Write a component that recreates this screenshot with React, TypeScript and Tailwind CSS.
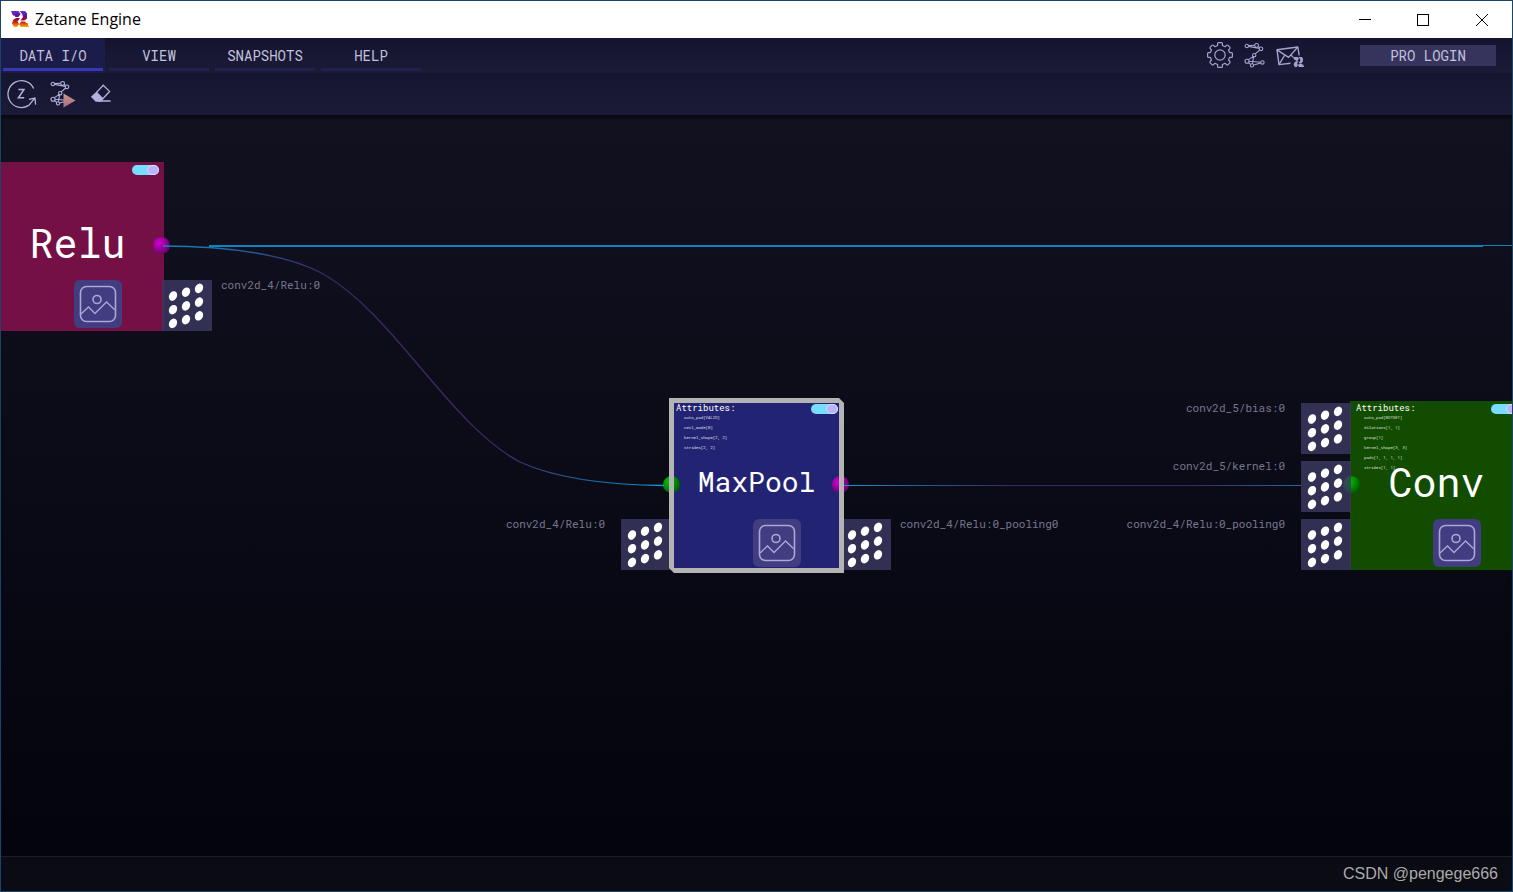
import { useState } from "react";
import clsx from "clsx";

type NodeProps = {
  title: string;
  position: string;
  color: string;
  titleSize: string;
  attributes?: string[];
  inputs?: string[];
  outputs?: string[];
  selected?: boolean;
};

const TABS = ["DATA I/O", "VIEW", "SNAPSHOTS", "HELP"];

const NODES: NodeProps[] = [
  {
    title: "Relu",
    position: "-left-[10px] top-[47px]",
    color: "bg-[#751046]",
    titleSize: "text-[40px]",
    outputs: ["conv2d_4/Relu:0"],
  },
  {
    title: "MaxPool",
    position: "left-[669px] top-[286px]",
    color: "bg-[#232374]",
    titleSize: "text-[28px]",
    attributes: [
      "auto_pad[VALID]",
      "ceil_mode[0]",
      "kernel_shape[2, 2]",
      "strides[2, 2]",
    ],
    inputs: ["conv2d_4/Relu:0"],
    outputs: ["conv2d_4/Relu:0_pooling0"],
    selected: true,
  },
  {
    title: "Conv",
    position: "left-[1349px] top-[286px]",
    color: "bg-[#124c00]",
    titleSize: "text-[40px]",
    attributes: [
      "auto_pad[NOTSET]",
      "dilations[1, 1]",
      "group[1]",
      "kernel_shape[3, 3]",
      "pads[1, 1, 1, 1]",
      "strides[1, 1]",
    ],
    inputs: [
      "conv2d_5/bias:0",
      "conv2d_5/kernel:0",
      "conv2d_4/Relu:0_pooling0",
    ],
  },
];

const LogoMark = () => (
  <>
    <path d="M0 0H7.4L9.6 3L7.4 6H4.4L3.6 4.6H2Z" />
    <path d="M8.6 0H14L16 2.2V7.4L13.4 9.6H9.4L12 6L11.2 3Z" />
    <path d="M2.2 9L5 6.9H9L6.6 10.4L8 13L6 16H3L1 12.4Z" />
    <path d="M9.6 16L8.2 13.2L10.2 10.5H14L15 12H16.4L18 16Z" />
  </>
);

const ZetaneLogo = () => (
  <svg width="18" height="17" viewBox="0 0 18 17" aria-hidden="true">
    <defs>
      <linearGradient id="logo" gradientUnits="userSpaceOnUse" x1="0" y1="0" x2="0" y2="16">
        <stop offset="0" stopColor="#6a2be0" />
        <stop offset="0.3" stopColor="#5a1590" />
        <stop offset="0.5" stopColor="#900a3c" />
        <stop offset="0.72" stopColor="#d02a10" />
        <stop offset="1" stopColor="#ffb400" />
      </linearGradient>
    </defs>
    <g fill="url(#logo)">
      <LogoMark />
    </g>
  </svg>
);

const ZGraph = () => (
  <g fill="none" stroke="currentColor" strokeWidth="1.1">
    <path d="M4.4 2.6L10.8 2.2M4.4 3.4L15.4 5.4M14.2 3.4L15.8 4.6M15.8 7L11.2 10.8M9.4 13.4L4.4 16.6M9.6 13.6L8.4 20.8M4.9 18.2L16.7 19.2M4.6 19.6L6.6 21.4M9.6 22L16.8 20" />
    <circle cx="2.8" cy="3" r="1.7" />
    <circle cx="12.6" cy="2.4" r="1.9" />
    <circle cx="17" cy="5.8" r="1.8" />
    <circle cx="10.2" cy="12.2" r="1.7" />
    <circle cx="3" cy="18.2" r="2" />
    <circle cx="8" cy="22.4" r="1.6" />
    <circle cx="18.4" cy="19.4" r="1.7" />
  </g>
);

const GearIcon = () => (
  <svg width="28" height="28" viewBox="0 0 28 28" fill="none" stroke="currentColor" strokeWidth="1.2" strokeLinejoin="round">
    <path d="M11.6 3.5V1.6Q11.6 0.6 12.6 0.6H15.4Q16.4 0.6 16.4 1.6V3.5L19.2 4.7L20.5 3.4Q21.3 2.7 22 3.4L23.8 5.2Q24.5 5.9 23.8 6.7L22.5 8L23.6 10.6H25.4Q26.4 10.6 26.4 11.6V14.4Q26.4 15.4 25.4 15.4H23.6L22.5 18L23.8 19.3Q24.5 20.1 23.8 20.8L22 22.6Q21.3 23.3 20.5 22.6L19.2 21.3L16.4 22.5V24.4Q16.4 25.4 15.4 25.4H12.6Q11.6 25.4 11.6 24.4V22.5L8.8 21.3L7.5 22.6Q6.7 23.3 6 22.6L4.2 20.8Q3.5 20.1 4.2 19.3L5.5 18L4.4 15.4H2.6Q1.6 15.4 1.6 14.4V11.6Q1.6 10.6 2.6 10.6H4.4L5.5 8L4.2 6.7Q3.5 5.9 4.2 5.2L6 3.4Q6.7 2.7 7.5 3.4L8.8 4.7Z" />
    <circle cx="14" cy="13" r="5.2" />
  </svg>
);

const MailIcon = () => (
  <svg width="30" height="24" viewBox="0 0 30 24" fill="none" stroke="currentColor" strokeWidth="1.4" strokeLinejoin="round">
    <path d="M15.5 19.2L4 20.6L2 5.8L22.8 3L24.2 11.4" />
    <path d="M2 5.8L13.6 13.4L22.8 3M4 20.6L9.8 11M16 11L18 13" />
    <g fill="currentColor" stroke="none" transform="translate(18 13) scale(0.62)">
      <LogoMark />
    </g>
  </svg>
);

const RestartIcon = () => (
  <svg width="30" height="30" viewBox="0 0 30 30" fill="none" stroke="currentColor" strokeWidth="1.3">
    <path d="M26.6 9.6A13.4 13.4 0 1 0 21.6 26.4" />
    <path d="M21.6 26.6L27.8 19.2M22 20.4L28 19L28.6 25.6" />
    <path d="M11.4 10.4H17L11.4 18.8H17.2" strokeWidth="1.5" />
  </svg>
);

const RunIcon = () => (
  <svg width="27" height="28" viewBox="0 0 27 28">
    <defs>
      <linearGradient id="run" x1="0" y1="0" x2="0" y2="1">
        <stop offset="0" stopColor="#c89a86" />
        <stop offset="1" stopColor="#a9688a" />
      </linearGradient>
    </defs>
    <g transform="translate(0 1)">
      <ZGraph />
    </g>
    <path d="M13.5 13.5L25.5 20.5L13.5 27.5Z" fill="url(#run)" />
  </svg>
);

const EraserIcon = () => (
  <svg width="22" height="22" viewBox="0 0 22 22" fill="none" stroke="currentColor" strokeWidth="1.3">
    <path d="M6.6 9.4L13.2 2.2L19.6 8.4L10.6 18M8 18H20.6" />
    <path d="M6.6 9.4L12.6 15.6L10.4 18H6L1.8 13.8Z" fill="currentColor" />
  </svg>
);

const PictureIcon = () => (
  <svg width="38" height="38" viewBox="0 0 38 38" fill="none" stroke="#aaa8d8" strokeWidth="1.6">
    <rect x="1.5" y="1.5" width="35" height="35" rx="6" />
    <circle cx="18" cy="14.5" r="4" />
    <path d="M2 29L9.5 22L16 28.5L27.5 17L36 25" strokeWidth="1.3" />
  </svg>
);

const Tensor = () => (
  <svg width="50" height="51" viewBox="0 0 50 51" className="shrink-0" aria-hidden="true">
    <rect width="50" height="51" fill="#3a3860" fillOpacity="0.82" />
    <g fill="#fff">
      {[0, 1, 2].map((col) =>
        [0, 1, 2].map((row) => {
          const x = 11 + col * 13;
          const y = 16 + row * 13.7 - col * 3.8;
          return (
            <ellipse key={`${col}${row}`} cx={x} cy={y} rx="3.9" ry="5" transform={`rotate(28 ${x} ${y})`} />
          );
        })
      )}
    </g>
  </svg>
);

const GraphNode = ({
  title,
  position,
  color,
  titleSize,
  attributes = [],
  inputs = [],
  outputs = [],
  selected,
}: NodeProps) => {
  return (
    <section aria-label={title} className={clsx("absolute h-[169px] w-[173px]", position)}>
      <div className={clsx("relative h-full overflow-hidden", color)}>
        {attributes.length > 0 && (
          <div className="absolute top-[2px] left-[6px] text-white">
            <p className="text-[9px] leading-[10px]">Attributes:</p>
            <ul className="pl-2 text-[4px] leading-[10px] text-white/80">
              {attributes.map((item) => (
                <li key={item}>{item}</li>
              ))}
            </ul>
          </div>
        )}
        <input
          type="checkbox"
          role="switch"
          defaultChecked
          aria-label={`Enable ${title}`}
          className="absolute top-[3px] right-[5px] h-[10px] w-[27px] appearance-none rounded-full bg-[#78dcff] before:absolute before:top-0 before:right-0 before:h-[10px] before:w-[12px] before:rounded-full before:border before:border-[#dcdcff] before:bg-[#b9b4fa]"
        />
        <h2 className={clsx("flex h-full items-center justify-center pb-2 font-normal text-white", titleSize)}>
          {title}
        </h2>
        <button
          type="button"
          aria-label={`Preview ${title}`}
          className="absolute top-[118px] left-[83px] flex size-12 items-center justify-center rounded-md bg-[#413d80]"
        >
          <PictureIcon />
        </button>
      </div>

      <span className="absolute top-[75px] -left-[7px] size-[17px] rounded-full bg-radial-[at_35%_35%] from-[#00c800] to-[#003c00]" />
      <span className="absolute top-[75px] -right-[6px] size-[17px] rounded-full bg-radial-[at_35%_35%] from-[#d200d2] to-[#460046]" />

      <ul className="absolute right-[172px] bottom-0 z-20 flex flex-col gap-[7px]">
        {inputs.map((name) => (
          <li key={name} className="flex items-start justify-end gap-4">
            <span className="text-[11px] leading-[10px] whitespace-nowrap text-[#77768e]">{name}</span>
            <Tensor />
          </li>
        ))}
      </ul>
      <ul className="absolute bottom-0 left-[171px] z-20 flex flex-col gap-[7px]">
        {outputs.map((name) => (
          <li key={name} className="flex items-start gap-[9px]">
            <Tensor />
            <span className="text-[11px] leading-[10px] whitespace-nowrap text-[#77768e]">{name}</span>
          </li>
        ))}
      </ul>

      {selected && (
        <div className="pointer-events-none absolute -inset-x-px -inset-y-[3px] z-30 border-[5px] border-[#b4b4b4] [clip-path:polygon(0_0,calc(100%-5px)_0,100%_5px,100%_100%,5px_100%,0_calc(100%-5px))]" />
      )}
    </section>
  );
};

const Wires = () => (
  <svg className="pointer-events-none absolute inset-0 z-10 h-full w-full" fill="none" aria-hidden="true">
    <defs>
      <linearGradient id="curve" gradientUnits="userSpaceOnUse" x1="162" y1="0" x2="663" y2="0">
        <stop offset="0" stopColor="#1482be" />
        <stop offset="0.15" stopColor="#1e64a0" />
        <stop offset="0.32" stopColor="#3c2864" />
        <stop offset="0.68" stopColor="#3c2864" />
        <stop offset="0.85" stopColor="#1e64a0" />
        <stop offset="1" stopColor="#1496dc" />
      </linearGradient>
      <linearGradient id="link" gradientUnits="userSpaceOnUse" x1="842" y1="0" x2="1349" y2="0">
        <stop offset="0" stopColor="#1496dc" />
        <stop offset="0.15" stopColor="#1e5f9b" />
        <stop offset="0.34" stopColor="#3c2864" />
        <stop offset="0.68" stopColor="#3c2864" />
        <stop offset="0.92" stopColor="#1e6eaa" />
      </linearGradient>
    </defs>
    <path d="M162 131C229 131 289 140 324 160C394 201 449 310 519 347C554 363 604 370 663 370.5" stroke="url(#curve)" strokeWidth="1.3" />
    <path d="M208 131H1482" stroke="#0f82be" strokeWidth="2" />
    <path d="M1482 130.5H4000" stroke="#0f82be" />
    <path d="M842 370.5H1300" stroke="url(#link)" />
  </svg>
);

const App = () => {
  const [activeTab, setActiveTab] = useState("DATA I/O");

  return (
    <div className="flex min-h-screen flex-col border border-[#1b4568] bg-[#0a0a16] font-['Roboto_Mono','Liberation_Mono',monospace]">
      <header className="flex h-[37px] items-center justify-between bg-white font-['Segoe_UI','Open_Sans',sans-serif] text-black">
        <div className="flex items-center gap-[6px] pl-[10px]">
          <ZetaneLogo />
          <h1 className="pb-[2px] text-[16px] leading-5">Zetane Engine</h1>
        </div>
        <div className="flex h-full">
          <button type="button" aria-label="Minimize" className="flex w-[58px] items-center justify-center">
            <svg width="12" height="12" stroke="currentColor">
              <path d="M0 5.5H12" />
            </svg>
          </button>
          <button type="button" aria-label="Maximize" className="flex w-[58px] items-center justify-center">
            <svg width="12" height="12" fill="none" stroke="currentColor">
              <rect x="0.5" y="0.5" width="11" height="11" />
            </svg>
          </button>
          <button type="button" aria-label="Close" className="flex w-[60px] items-center justify-center">
            <svg width="12" height="12" stroke="currentColor">
              <path d="M0 0L12 12M12 0L0 12" />
            </svg>
          </button>
        </div>
      </header>

      <div className="flex h-[35px] items-center justify-between bg-linear-to-b from-[#141430] to-[#1b1b38] text-[#c3c2dc]">
        <nav className="flex h-full">
          {TABS.map((tab) => (
            <button
              key={tab}
              type="button"
              onClick={() => setActiveTab(tab)}
              className={clsx(
                "flex w-[106px] flex-col justify-end pr-1 pb-[2px] pl-[2px] text-[14px]",
                tab === activeTab && "bg-linear-to-r from-[#1c1c4a] from-[104px] to-transparent to-[104px]"
              )}
            >
              <span
                className={clsx(
                  "w-full border-b-[3px] leading-6",
                  tab === activeTab ? "border-[#3838b4]" : "border-[#21214d]"
                )}
              >
                {tab}
              </span>
            </button>
          ))}
        </nav>
        <div className="flex items-center pr-4 text-[#a5a3cd]">
          <button type="button" aria-label="Settings" className="mr-[10px]">
            <GearIcon />
          </button>
          <button type="button" aria-label="Model" className="mr-[10px]">
            <svg width="21" height="25" viewBox="0 0 21 25">
              <ZGraph />
            </svg>
          </button>
          <button type="button" aria-label="Contact" className="mr-[55px]">
            <MailIcon />
          </button>
          <button type="button" className="h-[21px] w-[136px] bg-[#36345c] text-[14px] leading-5 text-[#c3c2dc]">
            PRO LOGIN
          </button>
        </div>
      </div>

      <div className="flex h-[42px] items-center gap-[13px] bg-linear-to-b from-[#151530] to-[#1b1b38] pl-[6px] text-[#b4b2dc]">
        <button type="button" aria-label="Restart">
          <RestartIcon />
        </button>
        <button type="button" aria-label="Run model">
          <RunIcon />
        </button>
        <button type="button" aria-label="Clear">
          <EraserIcon />
        </button>
      </div>

      <main className="relative min-h-[600px] flex-1 overflow-hidden bg-linear-to-b from-[#111120] via-[#0b0b17] to-[#04040c] shadow-[inset_0_3px_3px_#0a0a14]">
        {NODES.map((node) => (
          <GraphNode key={node.title} {...node} />
        ))}
        <Wires />
      </main>

      <footer className="flex h-[35px] items-center justify-end border-t border-[#191932] bg-[#0b0b14] pr-[14px] pb-px font-['Liberation_Sans',sans-serif] text-[16px] text-[#aaaaaa]">
        CSDN @pengege666
      </footer>
    </div>
  );
};

export default App;
